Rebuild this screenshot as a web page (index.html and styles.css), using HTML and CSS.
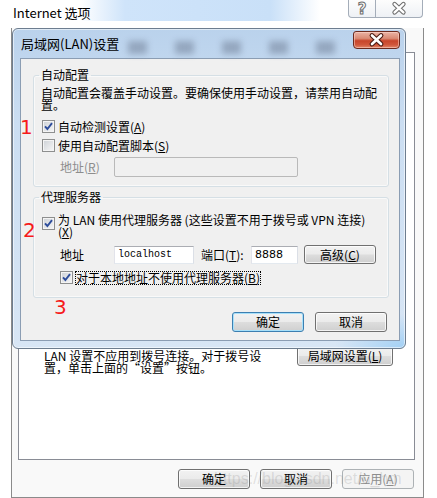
FILE: index.html
```html
<!DOCTYPE html>
<html lang="zh-CN">
<head>
    <meta charset="UTF-8">
    <meta name="viewport" content="width=device-width, initial-scale=1.0">
    <title>局域网(LAN)设置</title>
    <link rel="stylesheet" href="styles.css">
</head>
<body>
    <div class="ie-window">
        <div class="ie-titlebar">
            <span class="ie-title">Internet 选项</span>
            <div class="caption-btns">
                <span class="cap-btn cap-help">?</span>
                <span class="cap-btn cap-close">
                    <svg width="47" height="17" viewBox="0 0 47 17">
                        <path d="M19 4 L28 12.5 M28 4 L19 12.5" stroke="#6f6f6f" stroke-width="4.6" stroke-linecap="round"/>
                        <path d="M19 4 L28 12.5 M28 4 L19 12.5" stroke="#fff" stroke-width="2.4" stroke-linecap="round"/>
                    </svg>
                </span>
            </div>
        </div>

        <div class="ie-frame">
            <div class="tab-panel">
                <div class="lan-row">
                    <p class="lan-note">LAN 设置不应用到拨号连接。对于拨号设<br>置，单击上面的“设置”按钮。</p>
                    <button class="btn lan-btn">局域网设置(<u>L</u>)</button>
                </div>
            </div>
            <div class="ie-footer">
                <button class="btn">确定</button>
                <button class="btn">取消</button>
                <button class="btn" disabled>应用(<u>A</u>)</button>
            </div>
        </div>

        <div class="watermark">https://blog.csdn.net/u_hm</div>

        <!-- 局域网设置对话框 -->
        <div class="lan-dialog">
            <div class="lan-titlebar">
                <span class="lan-title">局域网(LAN)设置</span>
                <div class="glass-blur"><i></i><i></i><i></i><i></i><i></i></div>
                <span class="close-red">
                    <svg width="45" height="16" viewBox="0 0 45 16">
                        <path d="M18 3.5 L27 12 M27 3.5 L18 12" stroke="#4a1a12" stroke-width="4.8" stroke-linecap="round"/>
                        <path d="M18 3.5 L27 12 M27 3.5 L18 12" stroke="#fff" stroke-width="2.6" stroke-linecap="round"/>
                    </svg>
                </span>
            </div>

            <div class="lan-client">
                <fieldset class="group">
                    <legend>自动配置</legend>
                    <div class="desc">
                        <span class="desc-line">自动配置会覆盖手动设置。要确保使用手动设置，请禁用自动配</span>
                        <span class="desc-line">置。</span>
                    </div>
                    <div class="check-row row-auto">
                        <span class="cb"><svg width="11" height="11" viewBox="0 0 11 11"><path d="M2 5.3 L4.4 8 L9 2.2" fill="none" stroke="#2e4d9b" stroke-width="1.9"/></svg></span>
                        <span class="check-label">自动检测设置(<u>A</u>)</span>
                    </div>
                    <div class="check-row row-script">
                        <span class="cb"></span>
                        <span class="check-label">使用自动配置脚本(<u>S</u>)</span>
                    </div>
                    <div class="addr-row script-addr">
                        <span class="addr-label disabled">地址(<u>R</u>)</span>
                        <span class="field field-disabled"></span>
                    </div>
                </fieldset>

                <fieldset class="group proxy">
                    <legend>代理服务器</legend>
                    <div class="check-row proxy-check">
                        <span class="cb"><svg width="11" height="11" viewBox="0 0 11 11"><path d="M2 5.3 L4.4 8 L9 2.2" fill="none" stroke="#2e4d9b" stroke-width="1.9"/></svg></span>
                        <span class="check-label two-line">为 LAN 使用代理服务器 (这些设置不用于拨号或 VPN 连接)<br>(<u>X</u>)</span>
                    </div>
                    <div class="addr-row proxy-addr">
                        <span class="addr-label">地址</span>
                        <span class="field field-host"><span class="mono">localhost</span></span>
                        <span class="port-label">端口(<u>T</u>):</span>
                        <span class="field field-port">8888</span>
                        <button class="btn adv-btn">高级(<u>C</u>)</button>
                    </div>
                    <div class="check-row bypass">
                        <span class="cb"><svg width="11" height="11" viewBox="0 0 11 11"><path d="M2 5.3 L4.4 8 L9 2.2" fill="none" stroke="#2e4d9b" stroke-width="1.9"/></svg></span>
                        <span class="check-label focus">对于本地地址不使用代理服务器(<u>B</u>)</span>
                    </div>
                </fieldset>

                <div class="dialog-buttons">
                    <button class="btn btn-default">确定</button>
                    <button class="btn">取消</button>
                </div>
            </div>

            <span class="mark mark-1">1</span>
            <span class="mark mark-2">2</span>
            <span class="mark mark-3">3</span>
        </div>
    </div>
</body>
</html>
```

FILE: styles.css
```css
* {
    box-sizing: border-box;
}

body {
    margin: 0;
    width: 437px;
    height: 498px;
    overflow: hidden;
    background: #fff;
    font-family: "Noto Sans CJK SC", sans-serif;
    font-size: 12px;
    line-height: 12px;
    color: #000;
}

p {
    margin: 0;
}

.ie-window {
    position: relative;
    width: 437px;
    height: 498px;
}

/* 外层窗口标题栏 */
.ie-titlebar {
    height: 28px;
    display: flex;
    align-items: flex-start;
    padding-left: 13px;
    background:
        linear-gradient(90deg, rgba(210,230,250,0) 80px, #cfe4fa 125px, #c9e0f8 270px, rgba(210,230,250,0) 320px) top left / 100% 21px no-repeat,
        #fff;
}

.ie-title {
    font-size: 13px;
    line-height: 14px;
    margin-top: 6px;
}

.caption-btns {
    margin-left: auto;
    margin-right: 14px;
    display: flex;
}

.cap-btn {
    height: 18px;
    border: 1px solid #a4adb9;
    border-top: none;
    background: linear-gradient(#fdfdfd, #eef1f5);
    display: flex;
    align-items: center;
    justify-content: center;
}

.cap-help {
    width: 28px;
    border-radius: 0 0 0 4px;
    font-family: "DejaVu Sans", sans-serif;
    font-size: 15px;
    font-weight: bold;
    color: #fff;
    -webkit-text-stroke: 1px #6f6f6f;
}

.cap-close {
    width: 47px;
    border-left: none;
    border-radius: 0 0 4px 0;
}

/* 外层窗口主体 */
.ie-frame {
    margin-left: 11px;
    width: 413px;
    height: 470px;
    border: 1px solid #8b8b8b;
    border-top: none;
    padding: 24px 8px 0 6px;
    background: #f9f9f9;
}

.tab-panel {
    height: 408px;
    border: 1px solid #898c95;
    background: #fff;
    padding: 293px 21px 0 25px;
}

.lan-row {
    display: flex;
    justify-content: space-between;
    align-items: flex-start;
}

.lan-note {
    margin-top: 4px;
    line-height: 12px;
    white-space: nowrap;
}

.ie-footer {
    display: flex;
    justify-content: flex-end;
    gap: 10px;
    margin-top: 9px;
    padding-right: 1px;
}

.watermark {
    position: absolute;
    left: 214px;
    top: 470px;
    font-family: "Liberation Sans", sans-serif;
    font-size: 16px;
    line-height: 18px;
    color: rgba(130, 130, 130, 0.22);
    white-space: nowrap;
}

/* 按钮 */
.btn {
    width: 72px;
    height: 20px;
    padding: 0;
    border: 1px solid #707070;
    border-radius: 3px;
    background: linear-gradient(#f2f2f2 0%, #ebebeb 48%, #dddddd 52%, #cfcfcf 100%);
    box-shadow: inset 0 0 0 1px rgba(255, 255, 255, 0.75);
    font-family: inherit;
    font-size: 12px;
    line-height: 12px;
    color: #000;
}

.btn:disabled {
    border-color: #adb2b5;
    background: #f4f4f4;
    box-shadow: none;
    color: #8d8d8d;
}

.btn-default {
    border-color: #3c7fb1;
    box-shadow: inset 0 0 0 1px #a7e0fa;
}

.lan-btn {
    width: 96px;
}

/* 局域网设置对话框 */
.lan-dialog {
    position: absolute;
    left: 12px;
    top: 28px;
    width: 394px;
    height: 321px;
    padding: 0 5px 7px 7px;
    border: 1px solid #6d7d8f;
    border-radius: 6px;
    background:
        radial-gradient(70px 34px at 100% 100%, #a2d0f5, rgba(162, 208, 245, 0)),
        linear-gradient(#bad2ec, #cbdef2 30%, #d8e6f5);
    box-shadow: inset 0 0 0 1px rgba(255, 255, 255, 0.55);
    display: flex;
    flex-direction: column;
}

.lan-titlebar {
    height: 29px;
    flex: none;
    display: flex;
    align-items: flex-start;
}

.lan-title {
    font-size: 13px;
    line-height: 14px;
    margin-top: 8px;
    padding-left: 1px;
}

.glass-blur {
    display: flex;
    gap: 28px;
    margin-left: 9px;
    margin-top: 12px;
}

.glass-blur i {
    width: 19px;
    height: 13px;
    background: #8798b0;
    filter: blur(3px);
    opacity: 0.75;
}

.close-red {
    margin-left: auto;
    margin-top: 2px;
    width: 47px;
    height: 18px;
    border: 1px solid #6b2a1e;
    border-radius: 3px 3px 4px 4px;
    background: linear-gradient(#eab3a4 0%, #d98a74 40%, #c8452a 55%, #d0573b 80%, #e2876a 100%);
    box-shadow: inset 0 0 0 1px rgba(255, 220, 210, 0.5);
}

.close-red svg {
    display: block;
}

.lan-client {
    flex: 1;
    border: 1px solid #8b9db3;
    background: #f0f0f0;
    padding: 9px 10px 0 12px;
}

.group {
    margin: 0;
    padding: 5px 7px 9px;
    border: 1px solid #d5dfe5;
    border-radius: 3px;
    box-shadow: inset 0 0 0 1px rgba(255, 255, 255, 0.6);
}

.group legend {
    padding: 0 2px;
    margin-left: -2px;
    line-height: 14px;
}

.proxy {
    margin-top: 3px;
    padding-bottom: 12px;
}

.desc {
    height: 24px;
}

.desc-line {
    display: block;
    height: 12px;
    line-height: 12px;
    white-space: nowrap;
}

.check-row {
    display: flex;
    align-items: flex-start;
    gap: 3px;
    height: 14px;
}

.cb {
    flex: none;
    width: 13px;
    height: 13px;
    margin-left: 1px;
    border: 1px solid #8e8f8f;
    background: linear-gradient(135deg, #cdd1d6, #f7f7f7);
    box-shadow: inset 0 0 0 1px #f4f4f4;
}

.cb svg {
    display: block;
}

.check-label {
    line-height: 14px;
    white-space: nowrap;
}

.row-auto {
    margin-top: 9px;
}

.row-script {
    margin-top: 5px;
}

.addr-row {
    display: flex;
    align-items: center;
    padding-left: 19px;
}

.script-addr {
    margin-top: 4px;
    height: 20px;
}

.addr-label {
    width: 54px;
    flex: none;
}

.disabled {
    color: #8d8d8d;
}

.field {
    height: 18px;
    border: 1px solid #abadb3;
    border-color: #abadb3 #dbdfe6 #e3e9ef #e2e3ea;
    background: #fff;
    padding: 0 3px;
    display: flex;
    align-items: center;
    flex: none;
}

.field-disabled {
    width: 184px;
    height: 20px;
    border: 1px solid #b9b9b9;
    border-radius: 2px;
    background: #f0f0f0;
}

.proxy-check {
    margin-top: 5px;
    height: 24px;
}

.proxy-check .cb {
    margin-top: 3px;
}

.two-line {
    line-height: 12px;
}

.proxy-addr {
    margin-top: 7px;
    height: 19px;
}

.field-host {
    width: 80px;
}

.mono {
    font-family: "Liberation Mono", monospace;
    font-size: 10px;
}

.port-label {
    width: 50px;
    margin-left: 7px;
    white-space: nowrap;
}

.field-port {
    width: 47px;
    font-family: "DejaVu Sans", sans-serif;
    font-size: 11px;
}

.adv-btn {
    margin-left: 6px;
    height: 19px;
}

.bypass {
    margin-top: 7px;
    padding-left: 18px;
    gap: 2px;
}

.focus {
    padding: 0 1px;
    outline: 1px dotted #000;
    outline-offset: -1px;
}

.dialog-buttons {
    display: flex;
    justify-content: flex-end;
    gap: 11px;
    margin-top: 14px;
    padding-right: 2px;
}

/* 红色标注数字 */
.mark {
    position: absolute;
    font-family: "DejaVu Sans", sans-serif;
    font-size: 20px;
    line-height: 20px;
    color: #f61a1a;
}

.mark-1 {
    left: 7px;
    top: 88px;
}

.mark-2 {
    left: 10px;
    top: 191px;
}

.mark-3 {
    left: 41px;
    top: 268px;
}
```
